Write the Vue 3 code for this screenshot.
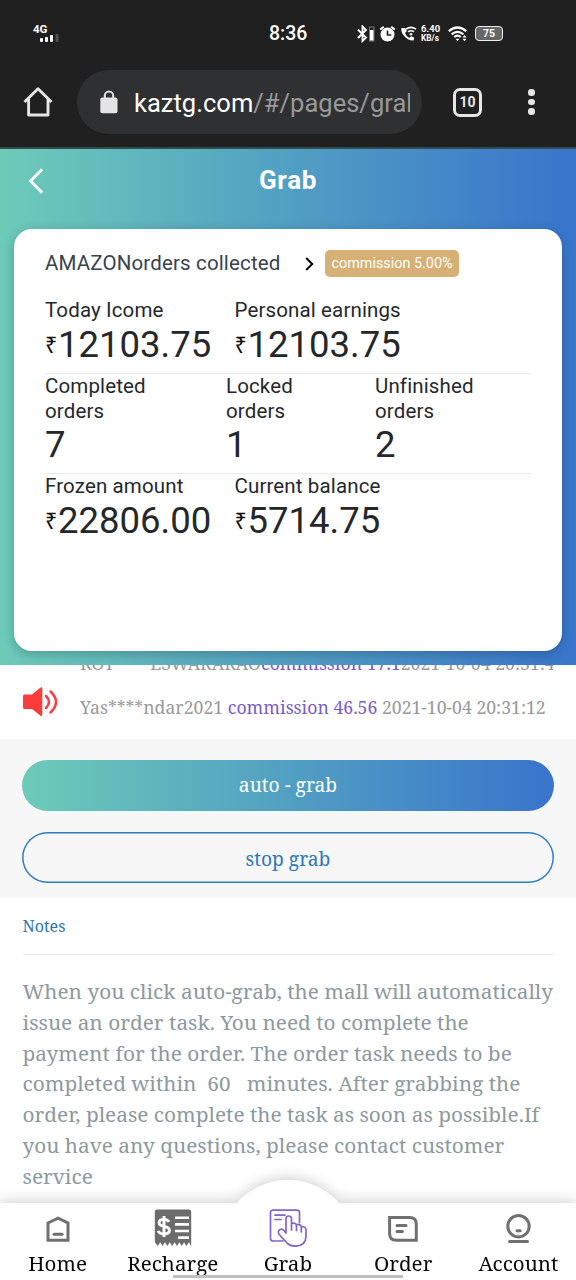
<script setup>
const rows = [
  { kind: 'two', cells: [['Today Icome', '12103.75', true], ['Personal earnings', '12103.75', true]] },
  { kind: 'three', cells: [['Completed orders', '7', false], ['Locked orders', '1', false], ['Unfinished orders', '2', false]] },
  { kind: 'two', cells: [['Frozen amount', '22806.00', true], ['Current balance', '5714.75', true]] }
]
const notes = [
  'When you click auto-grab, the mall will automatically',
  'issue an order task. You need to complete the',
  'payment for the order. The order task needs to be',
  'completed within  60   minutes. After grabbing the',
  'order, please complete the task as soon as possible.If',
  'you have any questions, please contact customer',
  'service'
]
</script>

<template>
  <div class="screen">
    <header class="browser">
      <div class="status">
        <div class="signal">
          <span class="net">4G</span>
          <svg width="20" height="8" viewBox="0 0 20 8"><g fill="#fff"><rect x="0" y="4" width="3" height="4" rx="1" /><rect x="5" y="3" width="3" height="5" rx="1" /><rect x="10" y="1" width="3" height="7" rx="1" /></g><rect x="15.500" y="0" width="3" height="8" rx="1" fill="#505050" /></svg>
        </div>
        <span class="clock">8:36</span>
        <svg class="sys" width="60" height="18" viewBox="0 0 60 18" fill="none" stroke="#fff">
          <path d="M1 4.800 9 12.500 5.500 16V1.500L9 5 1 13" stroke-width="1.900" />
          <rect x="12.500" y="2" width="4.500" height="14" stroke="#777" stroke-width="1" /><rect x="13" y="5" width="3.500" height="10.500" fill="#fff" stroke="none" />
          <circle cx="30.500" cy="9.500" r="7" fill="#fff" stroke="none" /><path d="M23.200 4.500 26.800 1.700M34.200 1.700 37.800 4.500" stroke-width="2" />
          <path d="M30.500 5.500V10h3.800" stroke="#202020" stroke-width="1.600" />
          <path d="M44.500 3c-1.500 5 5 13 12 12.500l.8-2.800-3-1.400-2 1.400c-2-1-3.700-3-4.200-4.800l1.700-1.800-1.600-3.200z" fill="#fff" stroke="none" />
          <path d="M49 4.200q5-3.700 10 0M51 6.900q3-2.300 6 0" stroke-width="1.600" /><circle cx="54" cy="9.300" r="1.300" fill="#fff" stroke="none" />
        </svg>
        <div class="speed"><span>6.40</span><span>KB/s</span></div>
        <svg class="wifi" width="20" height="16" viewBox="0 0 20 16" fill="none" stroke="#fff" stroke-width="2.200">
          <path d="M.8 5.200q8.700-7.400 17.400 0M3.600 8.300q5.900-5 11.800 0M6.200 11q3.300-2.600 6.600 0" /><path d="M7.500 12.700h4l-2 2.500z" fill="#fff" stroke="none" /><path d="m14.500 11.500 2-2.500 2 2.500zM14.500 12.800l2 2.500 2-2.500z" fill="#fff" stroke="none" />
        </svg>
        <div class="battery"><span>75</span></div>
      </div>
      <div class="toolbar">
        <svg class="home" width="30" height="30" viewBox="0 0 30 30" fill="none" stroke="#e6e6e6" stroke-width="2.900" stroke-linejoin="round"><path d="M1.500 15 15 1.700 28.500 15M5.600 12V28H25V12" /></svg>
        <div class="address">
          <svg width="18" height="24" viewBox="0 0 18 24"><rect x=".3" y="7.600" width="17.200" height="15.600" rx="2" fill="#e4e4e4" /><path d="M4.800 9V5.600a4.200 4.200 0 0 1 8.400 0V9" fill="none" stroke="#e4e4e4" stroke-width="2" /></svg>
          <div class="url">kaztg.com<span>/#/pages/grab</span></div>
        </div>
        <div class="tabs">10</div>
        <div class="dots"><i></i><i></i><i></i></div>
      </div>
    </header>

    <section class="hero">
      <div class="title">
        <svg width="16" height="26" viewBox="0 0 16 26" fill="none" stroke="#fff" stroke-width="2.800"><path d="M14.200 1.200 2.500 13l11.700 11.800" /></svg>
        <h1>Grab</h1>
      </div>
      <div class="card">
        <div class="card-head">
          <span class="shop">AMAZONorders collected</span>
          <svg width="9" height="14" viewBox="0 0 9 14" fill="none" stroke="#000" stroke-width="2"><path d="m1.200 1 6 6-6 6" /></svg>
          <span class="badge">commission 5.00%</span>
        </div>
        <div v-for="(row, i) in rows" :key="i" class="row" :class="row.kind">
          <div v-for="c in row.cells" :key="c[0]" class="cell">
            <div class="label">{{ c[0] }}</div>
            <div class="value"><small v-if="c[2]">₹</small>{{ c[1] }}</div>
          </div>
        </div>
      </div>
    </section>

    <section class="ticker">
      <svg width="36" height="30" viewBox="0 0 36 30"><path d="M1.500 7.500H9L17.500.6q1.800-1 1.800 1V27.800q0 2-1.800 1L9 22H1.500Q0 22 0 20.500V9q0-1.500 1.500-1.500z" fill="#fa3c3c" /><path d="M23 9q6 6 0 12M27.500 4.500q11 10.500 0 21" fill="none" stroke="#fa3c3c" stroke-width="2.500" stroke-linecap="round" /></svg>
      <div class="feed">
        <p class="prev"><span class="who">ROY****ESWARARAO</span><b>commission 17.1</b>2021-10-04 20:31:4</p>
        <p><span>Yas****ndar2021 </span><b>commission 46.56</b> 2021-10-04 20:31:12</p>
      </div>
    </section>

    <section class="actions">
      <button class="auto">auto - grab</button>
      <button class="stop">stop grab</button>
    </section>

    <section class="notes">
      <h2>Notes</h2>
      <div class="text"><p v-for="(line, i) in notes" :key="i">{{ line }}</p></div>
    </section>

    <nav>
      <div class="bar">
        <a class="n-home"><svg width="24" height="28" viewBox="0 0 24 28" fill="none" stroke="#707070" stroke-width="3"><path d="M2 8 12 3.200l10 4.800V25.200H2z" /><path d="M8 19.300h8" stroke-linecap="round" /></svg><span>Home</span></a>
        <a class="n-recharge"><svg width="38" height="38" viewBox="0 0 38 38"><path d="M.8 2.500Q.8.500 3 .500H35Q37.200.500 37.200 2.500V37l-2.300-3.700L32.500 37l-2.400-3.700L27.700 37l-2.400-3.700L23 37l-2.400-3.700L18.200 37l-2.400-3.700L13.400 37 11 33.300 8.600 37l-2.400-3.700L3.800 37 .8 33z" fill="#6c6c6c" /><path d="M14.800 13q-1-2.600-4.800-2.600-4.900 0-4.900 3.400 0 2.600 4.900 3.600 5.400 1 5.400 4.200 0 3.300-5.400 3.300-4.700 0-5.700-3M10 7v21" fill="none" stroke="#fff" stroke-width="2.900" /><path d="M21 8.800h14M21 15.400h14M21 22h14M24 28.600h11" stroke="#fff" stroke-width="2.600" /></svg><span>Recharge</span></a>
        <a class="n-grab"><svg width="38" height="38" viewBox="0 0 38 38" fill="none" stroke="#8066c8" stroke-width="1.700" stroke-linejoin="round" stroke-linecap="round"><path d="M14 32H4Q1.500 32 1.500 29.500V3.500Q1.500 1.200 4 1.200H28Q30.500 1.200 30.500 3.500V13.500M6 6.200h10M6 10.500h6M17 22V9.500q0-2.500 2.700-2.500T22.500 9.500V21M22.500 14.500q4-1.500 5 2V21.500M27.500 15.500q4-.7 4.800 2.200V23M32.300 17.500q4.400 0 4.700 3V27Q37 37 26 37.200 21.500 37.200 18.500 34.500L9.800 25Q8.500 22 11 20.500T17 24V21" /></svg><span>Grab</span></a>
        <a class="n-order"><svg width="30" height="26" viewBox="0 0 30 26" fill="none" stroke="#707070" stroke-width="3"><path d="M1.600 1.600H21.500Q28.300 1.600 28.300 8.500V24.300H8.500Q1.600 24.300 1.600 17.500z" /><path d="M9 9.500h9M9 15.500h5.500" stroke-linecap="round" /></svg><span>Order</span></a>
        <a class="n-account"><svg width="26" height="32" viewBox="0 0 26 32" fill="none" stroke="#707070" stroke-width="3"><circle cx="13.500" cy="13.200" r="10.700" /><path d="M12 17.700h3.200M4.500 28.500h18" stroke-linecap="round" /></svg><span>Account</span></a>
      </div>
      <i class="pill"></i>
    </nav>
  </div>
</template>

<style>
body { margin: 0; background: #fff; }
</style>

<style scoped>
* { box-sizing: border-box; }
p, h1, h2 { margin: 0; font-weight: 400; }
svg { display: block; flex: none; }
.screen { width: 576px; height: 1280px; overflow: hidden; display: flex; flex-direction: column; background: #fff; font-family: "Noto Serif", "DejaVu Serif Condensed", "DejaVu Serif", serif; }
.browser { height: 149px; background: #202020; border-bottom: 2px solid #304c4c; font-family: Roboto, sans-serif; color: #fff; flex: none; }
.status { height: 67px; display: flex; align-items: center; padding-left: 33px; }
.signal { width: 236px; height: 18px; }
.net { display: block; font-size: 11.500px; line-height: 9px; font-weight: 700; }
.signal svg { margin-left: 7px; }
.clock { font-size: 19.500px; font-weight: 500; width: 88px; line-height: 22px; padding-top: 1px; }
.speed { display: flex; flex-direction: column; font-size: 9.500px; line-height: 8.500px; font-weight: 700; width: 20px; margin-left: 4px; white-space: nowrap; }
.speed span:last-child { font-size: 8.300px; }
.wifi { margin-left: 7px; }
.battery { margin-left: 7px; width: 28px; height: 15px; border: 1.500px solid #eee; border-radius: 4px; background: #666; font-size: 10.500px; line-height: 13px; font-weight: 700; text-align: center; }
.toolbar { height: 70px; display: flex; align-items: center; padding: 0 0 0 23px; }
.address { margin-left: 24px; width: 345px; height: 64px; border-radius: 32px; background: #2f3032; display: flex; align-items: center; padding-left: 23px; }
.url { margin-left: 16px; width: 276px; overflow: hidden; white-space: nowrap; font-size: 25.500px; line-height: 34px; padding-top: 2px; letter-spacing: .02px; }
.url span { color: #98999a; }
.tabs { margin-left: 31px; width: 29px; height: 29px; border: 3px solid #e6e6e6; border-radius: 7px; font-size: 14px; line-height: 23px; font-weight: 700; text-align: center; color: #e6e6e6; }
.dots { margin-left: 46px; display: flex; flex-direction: column; gap: 3px; }
.dots i { width: 6.500px; height: 6.500px; border-radius: 50%; background: #e6e6e6; }

.hero { height: 516px; flex: none; background: linear-gradient(90deg, #6dcbb8 0, #519fc3 50%, #3a77cc 97%); font-family: Roboto, sans-serif; padding: 0 14px; }
.title { height: 80px; display: grid; grid-template-columns: 40px 1fr 40px; align-items: center; padding-bottom: 17px; color: #fff; }
.title svg { margin-left: 14px; }
.title h1 { text-align: center; font-size: 26px; font-weight: 700; line-height: 30px; letter-spacing: .7px; padding-bottom: 2px; }
.card { height: 422px; width: 548px; background: #fff; border-radius: 18px; box-shadow: 0 3px 12px rgba(0, 0, 0, .22); padding: 0 31px; }
.card-head { height: 69px; display: flex; align-items: center; }
.shop { width: 260px; font-size: 20.500px; color: #39424e; letter-spacing: .15px; padding-bottom: 2px; }
.badge { margin-left: 11px; width: 134px; height: 27px; border-radius: 5px; background: #d6b074; color: #fff; font-size: 14.400px; line-height: 27px; text-align: center; }
.row { display: flex; border-bottom: 1px solid #e8ebec; color: #25282b; }
.row.two { height: 76px; }
.row.three { height: 100px; }
.row:last-child { border: 0; }
.two .cell:first-child { width: 189.500px; }
.three .cell:nth-child(1) { width: 181px; }
.three .cell:nth-child(2) { width: 149px; }
.three .label { width: 110px; }
.label { font-size: 20.500px; line-height: 25px; letter-spacing: .13px; }
.value { font-size: 36.500px; line-height: 43px; white-space: nowrap; }
.three .value { line-height: 41px; }
.value small { font-family: "Noto Sans", sans-serif; font-size: 21.500px; display: inline-block; width: 13px; color: #111; vertical-align: 4.500px; line-height: 20px; }

.ticker { height: 74px; flex: none; display: flex; padding-left: 23px; }
.ticker svg { margin-top: 22px; }
.feed { margin-left: 21px; width: 473px; height: 74px; overflow: hidden; color: #999; font-size: 17.660px; }
.feed p { line-height: 24px; height: 44px; white-space: nowrap; }
.feed .prev { margin-top: -14.500px; }
.feed b { font-weight: 400; color: #7a5cc8; }
.who { display: inline-block; width: 181px; }

.actions { height: 159px; flex: none; background: #f7f7f7; padding: 21px 22px 0; display: flex; flex-direction: column; gap: 21px; }
.actions button { height: 51px; border-radius: 26px; font-family: inherit; font-size: 19.200px; padding: 0; }
.actions .auto { border: 0; padding-bottom: 2px; color: #fff; background: linear-gradient(90deg, #6dcbb8 0, #519fc3 50%, #3a77cc 97%); }
.actions .stop { border: 0; box-shadow: inset 0 0 0 1.500px #2f7cc6; padding-top: 1px; background: transparent; color: #2d78bd; }

.notes { height: 305px; flex: none; padding: 0 22.500px; }
.notes h2 { height: 57px; line-height: 57px; font-size: 16px; color: #2d78b5; border-bottom: 1px solid #ececec; }
.text { margin-top: 21px; font-size: 20.800px; line-height: 30.750px; color: #8c9a9d; white-space: pre; }

nav { height: 77px; position: relative; filter: drop-shadow(0 -2px 7px rgba(0, 0, 0, .18)); background: #fff; }
nav::before { content: ""; position: absolute; left: 219px; top: -23px; width: 138px; height: 100px; background: #fff; border-radius: 69px 69px 0 0; }
.bar { position: relative; height: 77px; display: grid; grid-template-columns: repeat(5, 115.200px); }
.bar a { display: flex; flex-direction: column; align-items: center; justify-content: flex-end; font-size: 20.600px; line-height: 24px; padding-bottom: 5px; height: 77px; color: #0a0a0a; }
.bar svg { margin-bottom: 8px; }
.bar .n-recharge svg, .bar .n-grab svg { margin-bottom: 4px; }
.bar .n-order svg { margin-bottom: 9px; }
.bar .n-account svg { margin-bottom: 6px; }
.pill { position: absolute; left: 173px; bottom: 2px; width: 230px; height: 3px; background: #bfbfbf; }
</style>
